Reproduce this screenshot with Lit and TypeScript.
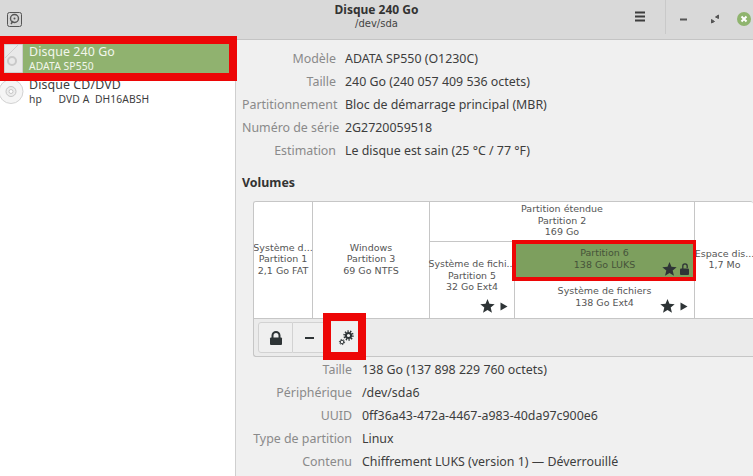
import { LitElement, html, css, svg } from "lit";
import { customElement } from "lit/decorators.js";

const star = html`<svg class="gl" width="15" height="14" viewBox="0 0 16 15"><path fill="#2e3436" d="M8 0l2.100 5.200 5.600.4-4.300 3.600 1.400 5.500L8 11.700 3.200 14.700l1.400-5.500L.3 5.600l5.600-.4z"/></svg>`;
const play = html`<svg class="gl" width="8" height="9" viewBox="0 0 8 9"><path fill="#2e3436" d="M.5.5l7 4-7 4z"/></svg>`;
const openLock = html`<svg class="gl" width="9" height="12" viewBox="0 0 9 12"><path fill="none" stroke="#2e3436" stroke-width="1.300" d="M2.800 6V3a2.200 2.200 0 0 1 4.400 0V5"/><rect x="0" y="5.500" width="9" height="6.500" rx="1" fill="#2e3436"/></svg>`;
const lock = svg`<path fill="none" stroke="#2e3436" stroke-width="2" d="M3.500 7V4.500a3.500 3.500 0 0 1 7 0V7"/><rect x="1" y="6.500" width="12" height="7.500" rx="1" fill="#2e3436"/>`;

const gear = (cx: number, cy: number, r: number, sw: number) =>
  svg`<circle cx="${cx}" cy="${cy}" r="${r}" fill="none" stroke="#2e3436" stroke-width="${sw}"/>
  <circle cx="${cx}" cy="${cy}" r="${r + sw * 0.8}" fill="none" stroke="#2e3436" stroke-width="${sw}" stroke-dasharray="1.300 1.300"/>`;

@customElement("app-root")
export class AppRoot extends LitElement {
  static styles = css`
    :host { display: block; width: 753px; height: 476px; position: relative; overflow: hidden; background: #f0f0f0; font-family: "Noto Sans", "Open Sans", sans-serif; font-size: 12.4px; color: #3d3d3d; }
    .hdr { height: 40px; box-sizing: border-box; background: #d9d9d9; border-bottom: 1px solid #c4c4c4; display: flex; align-items: center; position: relative; }
    .appicon { margin-left: 7px; width: 15px; height: 15px; margin-top: -1px; }
    .title { position: absolute; left: 0; right: 0; top: 2px; text-align: center; font-family: "Noto Sans", sans-serif; font-size: 12px; line-height: 15px; color: #333; }
    .title b { display: block; font-weight: 700; }
    .title span { display: block; font-family: "DejaVu Sans", sans-serif; font-size: 10px; line-height: 14px; color: #444; }
    .ctrls { margin-left: auto; display: flex; align-items: center; height: 34px; margin-top: -6px; position: relative; }
    .menu { width: 11px; height: 11px; margin-right: 19px; margin-top: 0; }
    .sep { width: 1px; height: 34px; background: #c9c9c9; margin-right: 11px; }
    .wbtn { width: 14px; height: 14px; margin-top: 4px; }
    .w1 { margin-right: 17px; }
    .w2 { margin-right: 15px; }
    .close { width: 14px; height: 14px; border-radius: 50%; background: #8fb46e; color: #fff; margin-right: 2px; margin-top: 4px; }
    .body { display: flex; height: 436px; }
    .side { width: 235px; flex: none; background: #fff; border-right: 1px solid #cfcfcf; box-sizing: content-box; padding-top: 4px; font-family: "Noto Sans", sans-serif; }
    .row { height: 29px; display: flex; align-items: center; padding-left: 4px; margin-right: 6px; color: #3d3d3d; }
    .row.sel { background: #90b26f; color: #f2f6ec; margin-bottom: 4px; }
    .row .ic { width: 20px; height: 29px; flex: none; }
    .row .tx { margin-left: 5px; }
    .row .t1 { font-size: 12.4px; line-height: 15px; letter-spacing: .1px; }
    .row .t2 { font-size: 10.3px; line-height: 13px; white-space: pre; margin-top: 1px; letter-spacing: .1px; }
    .row.cd { padding-left: 0; height: 28px; }
    .row.cd .ic { width: 25px; height: 25px; }
    .row.cd .tx { margin-left: 4px; }
    .main { flex: 1; min-width: 0; padding: 7px 0 0 6px; }
    .kv { display: grid; grid-template-columns: 94px 1fr; column-gap: 9px; }
    .kv > div { height: 23px; line-height: 23px; white-space: nowrap; }
    .k { color: #8a8a8a; text-align: right; }
    .v { color: #3d3d3d; }
    .h { font-weight: 700; margin: 12px 0 0; height: 18px; line-height: 18px; color: #333; font-size: 12.4px; }
    .vol { margin: 9px 0 0 11px; width: 500px; height: 156px; box-sizing: border-box; border: 1px solid #c6c6c6; border-radius: 3px 3px 0 3px; border-right: none; background: #ebebeb; overflow: hidden; }
    .parts { display: flex; height: 116px; background: #fff; border-bottom: 1px solid #c6c6c6; font-family: "DejaVu Sans", sans-serif; font-size: 9.5px; line-height: 11.5px; color: #555; text-align: center; }
    .p { box-sizing: border-box; border-right: 1px solid #c6c6c6; display: flex; flex-direction: column; align-items: center; justify-content: center; white-space: nowrap; position: relative; flex: none; padding-bottom: 2px; }
    .ext { width: 265px; box-sizing: border-box; border-right: 1px solid #c6c6c6; display: flex; flex-direction: column; flex: none; }
    .ext-h { height: 38px; border-bottom: 1px solid #c6c6c6; box-sizing: content-box; padding-top: 1px; }
    .ext-b { display: flex; flex: 1; min-height: 0; }
    .p5 { width: 85px; padding-bottom: 9px; font-size: 9.4px; }
    .col { flex: 1; display: flex; flex-direction: column; }
    .luks { height: 37px; background: #7d9f5e; color: #46533a; display: flex; flex-direction: column; align-items: center; justify-content: center; position: relative; padding-bottom: 4px; box-sizing: border-box; }
    .fs { flex: 1; display: flex; flex-direction: column; align-items: center; position: relative; padding-top: 6px; }
    .marks { position: absolute; right: 6px; bottom: 5px; display: flex; align-items: center; gap: 5px; }
    .luks .marks { bottom: 3px; right: 5px; gap: 3px; }
    .gl { display: block; }
    .bar { height: 39px; padding: 3px 0 0 4px; display: flex; }
    .bbtn { height: 31px; box-sizing: border-box; display: flex; align-items: center; justify-content: center; border: 1px solid #d2d2d2; background: #efefef; }
    .b1 { width: 35px; border-radius: 3px 0 0 3px; }
    .b2 { width: 35px; border-left: none; }
    .b3 { width: 35px; border: none; background: #f0f0f0; }
    .kv2 { margin-top: 1px; grid-template-columns: 110px 1fr; column-gap: 10px; }
    .red { position: absolute; border: 8px solid #ed0606; box-sizing: border-box; pointer-events: none; }
    .r1 { left: 0; top: 36px; width: 237px; height: 45px; border-width: 8px 8px 8px 4px; }
    .r2 { left: 512px; top: 240px; width: 184px; height: 41px; border-width: 4px 3px 4px 4px; }
    .r3 { left: 323px; top: 313px; width: 43px; height: 47px; border-width: 8px; }
  `;

  render() {
    return html`
      <div class="hdr">
        <svg class="appicon" viewBox="0 0 15 15"><rect x=".5" y=".5" width="14" height="14" rx="2" fill="#d4d4d4" stroke="#555"/><circle cx="7.500" cy="6.500" r="4" fill="none" stroke="#555" stroke-width="1.400"/><path d="M6 9l-2 3" stroke="#555" stroke-width="1.400"/><circle cx="7.500" cy="6.500" r="1" fill="#555"/></svg>
        <div class="title"><b>Disque 240 Go</b><span>/dev/sda</span></div>
        <div class="ctrls">
          <svg class="menu" viewBox="0 0 11 11"><path d="M0 1.500h10M0 5.500h10M0 9.500h10" stroke="#3d3d3d" stroke-width="2"/></svg>
          <div class="sep"></div>
          <svg class="wbtn w1" viewBox="0 0 14 14"><path d="M3 7.500h7" stroke="#555" stroke-width="2"/></svg>
          <svg class="wbtn w2" viewBox="0 0 14 14"><path d="M7.500 5l3-2v3.500zM6.500 9.500l-3 1.500V7.500z" fill="#555" stroke="#555"/></svg>
          <svg class="close" viewBox="0 0 14 14"><path d="M4.500 4.500l5 5M9.500 4.500l-5 5" stroke="#fff" stroke-width="2"/></svg>
        </div>
      </div>
      <div class="body">
        <div class="side">
          <div class="row sel">
            <svg class="ic" viewBox="0 0 20 29"><path d="M.5 .5h18v28H.5z" fill="#e9e9e9" stroke="#cfcfcf"/><path d="M1 14L14 1" stroke="#cfcfcf" fill="none"/><circle cx="8" cy="17" r="4" fill="none" stroke="#c9c9c9" stroke-width="2"/></svg>
            <div class="tx"><div class="t1">Disque 240 Go</div><div class="t2">ADATA SP550</div></div>
          </div>
          <div class="row cd">
            <svg class="ic" viewBox="0 0 25 25"><circle cx="11" cy="12.500" r="12" fill="#f5f5f5" stroke="#d2d2d2"/><circle cx="11" cy="12.500" r="5" fill="#ececec" stroke="#c6c6c6"/><circle cx="11" cy="12.500" r="2" fill="#fff" stroke="#c6c6c6"/></svg>
            <div class="tx"><div class="t1">Disque CD/DVD</div><div class="t2">hp      DVD A  DH16ABSH</div></div>
          </div>
        </div>
        <div class="main">
          <div class="kv">
            <div class="k">Modèle</div><div class="v">ADATA SP550 (O1230C)</div>
            <div class="k">Taille</div><div class="v">240 Go (240 057 409 536 octets)</div>
            <div class="k">Partitionnement</div><div class="v">Bloc de démarrage principal (MBR)</div>
            <div class="k">Numéro de série</div><div class="v">2G2720059518</div>
            <div class="k">Estimation</div><div class="v">Le disque est sain (25 °C / 77 °F)</div>
          </div>
          <div class="h">Volumes</div>
          <div class="vol">
            <div class="parts">
              <div class="p" style="width:59px"><div>Système d...</div><div>Partition 1</div><div>2,1 Go FAT</div></div>
              <div class="p" style="width:117px"><div>Windows</div><div>Partition 3</div><div>69 Go NTFS</div></div>
              <div class="ext">
                <div class="ext-h"><div>Partition étendue</div><div>Partition 2</div><div>169 Go</div></div>
                <div class="ext-b">
                  <div class="p p5"><div>Système de fichi...</div><div>Partition 5</div><div>32 Go Ext4</div><div class="marks">${star}${play}</div></div>
                  <div class="col">
                    <div class="luks"><div>Partition 6</div><div>138 Go LUKS</div><div class="marks">${star}${openLock}</div></div>
                    <div class="fs"><div>Système de fichiers</div><div>138 Go Ext4</div><div class="marks">${star}${play}</div></div>
                  </div>
                </div>
              </div>
              <div class="p" style="width:59px;border-right:none"><div>Espace dis...</div><div>1,7 Mo</div></div>
            </div>
            <div class="bar">
              <div class="bbtn b1"><svg width="14" height="14" viewBox="0 0 14 14">${lock}</svg></div>
              <div class="bbtn b2"><svg width="12" height="4" viewBox="0 0 12 4"><path d="M1 2h9" stroke="#2e3436" stroke-width="2"/></svg></div>
              <div class="bbtn b3"><svg width="16" height="16" viewBox="0 0 16 16">${gear(10.5, 5.5, 2.6, 2)}${gear(4, 12, 1.8, 1)}</svg></div>
            </div>
          </div>
          <div class="kv kv2">
            <div class="k">Taille</div><div class="v">138 Go (137 898 229 760 octets)</div>
            <div class="k">Périphérique</div><div class="v">/dev/sda6</div>
            <div class="k">UUID</div><div class="v">0ff36a43-472a-4467-a983-40da97c900e6</div>
            <div class="k">Type de partition</div><div class="v">Linux</div>
            <div class="k">Contenu</div><div class="v">Chiffrement LUKS (version 1) — Déverrouillé</div>
          </div>
        </div>
      </div>
      <div class="red r1"></div>
      <div class="red r2"></div>
      <div class="red r3"></div>
    `;
  }
}
